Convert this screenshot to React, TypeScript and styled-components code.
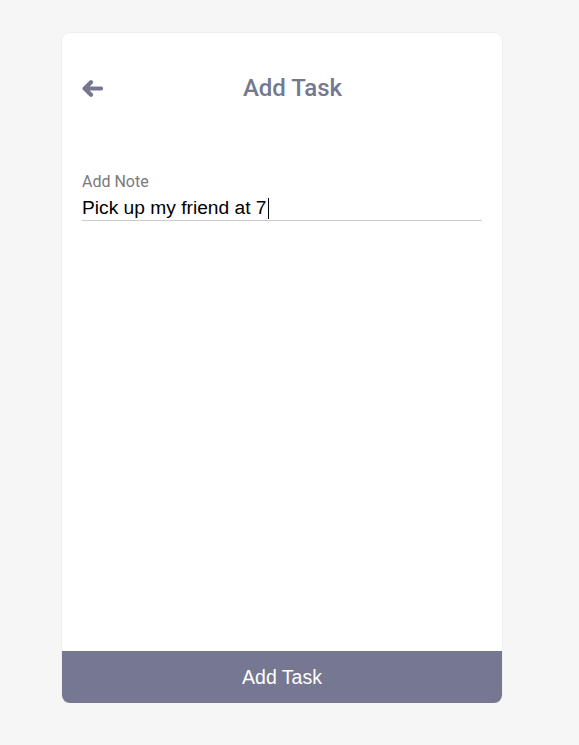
import React from "react";
import styled, { createGlobalStyle } from "styled-components";

const Global = createGlobalStyle`
  html, body { margin: 0; padding: 0; background: #f6f6f6; }
  body { font-family: Roboto, "Liberation Sans", sans-serif; }
`;

const Page = styled.div`
  padding: 33px 0 0 62px;
`;

const Card = styled.div`
  width: 440px;
  height: 670px;
  background: #fff;
  border-radius: 8px;
  box-shadow: 0 0 0 1px #efefef;
  display: flex;
  flex-direction: column;
  overflow: hidden;
`;

const Header = styled.div`
  display: flex;
  align-items: center;
  height: 32px;
  margin-top: 39px;
  padding: 0 20px;
`;

const Back = styled.button`
  border: 0;
  background: none;
  padding: 0;
  color: #757890;
  display: flex;
  cursor: pointer;
`;

const Title = styled.h1`
  flex: 1;
  margin: 0;
  text-align: center;
  font-family: Roboto, sans-serif;
  font-weight: 500;
  font-size: 24px;
  color: #757890;
`;

const Body = styled.div`
  flex: 1;
  padding: 68px 20px 0;
`;

const Label = styled.label`
  display: block;
  font-family: Roboto, sans-serif;
  font-size: 16px;
  color: #7a7a7a;
  line-height: 20px;
`;

const Input = styled.div`
  margin-top: 4px;
  font-family: "Liberation Sans", Arial, sans-serif;
  font-size: 19.2px;
  color: #000;
  line-height: 24px;
  padding-bottom: 0;
  border-bottom: 1px solid #cccccc;
  display: flex;
  align-items: center;
`;

const Caret = styled.span`
  display: inline-block;
  width: 1px;
  height: 21px;
  background: #000;
  margin-left: 1px;
`;

const Submit = styled.button`
  height: 52px;
  border: 0;
  background: #757890;
  color: #fff;
  font-family: "Liberation Sans", Arial, sans-serif;
  font-size: 19.5px;
  cursor: pointer;
`;

const ArrowIcon = () => (
  <svg width="21" height="17" viewBox="0 0 21 17" fill="none">
    <path
      d="M9 2.3 L2.6 8.5 L9 14.7 M2.8 8.5 H19"
      stroke="currentColor"
      strokeWidth="4.2"
      strokeLinecap="round"
      strokeLinejoin="round"
    />
  </svg>
);

export default function App() {
  return (
    <>
      <Global />
      <Page>
        <Card>
          <Header>
            <Back aria-label="Back">
              <ArrowIcon />
            </Back>
            <Title>Add Task</Title>
          </Header>
          <Body>
            <Label>Add Note</Label>
            <Input>
              Pick up my friend at 7<Caret />
            </Input>
          </Body>
          <Submit>Add Task</Submit>
        </Card>
      </Page>
    </>
  );
}
